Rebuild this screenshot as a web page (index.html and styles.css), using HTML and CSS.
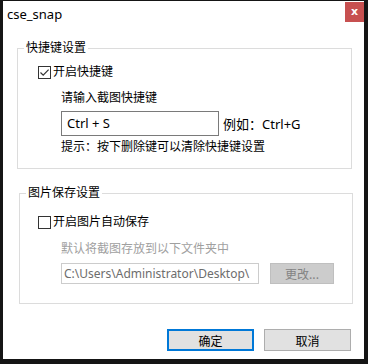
FILE: index.html
```html
<!DOCTYPE html>
<html lang="zh-CN">
<head>
  <meta charset="UTF-8">
  <title>cse_snap</title>
  <link rel="stylesheet" href="styles.css">
</head>
<body>

  <!-- 窗口 -->
  <div class="window">
    <div class="titlebar">
      <span class="title">cse_snap</span>
      <span class="close">x</span>
    </div>

    <!-- 快捷键设置 -->
    <fieldset class="group group-key">
      <legend>快捷键设置</legend>
      <div class="check-row">
        <span class="box checked">
          <svg width="11" height="11" viewBox="0 0 11 11"><path d="M1.5 5.5 L4.2 8.2 L9.6 2.6" fill="none" stroke="#333" stroke-width="1.2"/></svg>
        </span>
        <span>开启快捷键</span>
      </div>
      <div class="line first">请输入截图快捷键</div>
      <div class="input-row">
        <div class="input">Ctrl + S</div>
        <span class="example">例如：Ctrl+G</span>
      </div>
      <div class="line hint">提示：按下删除键可以清除快捷键设置</div>
    </fieldset>

    <!-- 图片保存设置 -->
    <fieldset class="group group-save">
      <legend>图片保存设置</legend>
      <div class="check-row">
        <span class="box"></span>
        <span>开启图片自动保存</span>
      </div>
      <div class="line first gray">默认将截图存放到以下文件夹中</div>
      <div class="path-row">
        <div class="input path">C:\Users\Administrator\Desktop\</div>
        <button class="btn disabled">更改...</button>
      </div>
    </fieldset>

    <div class="actions">
      <button class="btn default">确定</button>
      <button class="btn">取消</button>
    </div>
  </div>

</body>
</html>
```

FILE: styles.css
```css
body {
  margin: 0;
  padding: 1px 4px 5px 3px;
  background: #151515;
  font-family: "Noto Sans", "Noto Sans CJK SC", sans-serif;
  font-size: 12px;
  color: #000;
}

/* 窗口 */
.window {
  width: 361px;
  height: 358px;
  background: #fff;
  overflow: hidden;
}

.titlebar {
  display: flex;
  justify-content: space-between;
  align-items: flex-start;
  height: 39px;
}

.title {
  margin: 4px 0 0 4px;
  font-size: 13px;
  line-height: 18px;
}

.close {
  width: 19px;
  height: 20px;
  margin-top: 1px;
  background: #c75050;
  color: #fff;
  font-family: "DejaVu Sans", sans-serif;
  font-weight: bold;
  font-size: 11px;
  line-height: 19px;
  text-align: center;
}

/* 分组框 */
.group {
  margin: 0;
  padding: 0 0 13px;
  border: 1px solid #dcdcdc;
  min-width: 0;
}

.group-key {
  margin-left: 14px;
  width: 333px;
}

.group-save {
  margin: 16px 0 0 16px;
  width: 332px;
  padding-bottom: 19px;
}

.group legend {
  margin-left: 6px;
  padding: 0 2px;
  line-height: 16px;
}

.check-row {
  display: flex;
  align-items: center;
  gap: 2px;
  margin: 8px 0 0 20px;
  line-height: 16px;
}

.group-save .check-row {
  margin: 13px 0 0 18px;
}

.box {
  display: flex;
  align-items: center;
  justify-content: center;
  width: 11px;
  height: 11px;
  border: 1px solid #333;
}

.line {
  padding-left: 43px;
  line-height: 16px;
}

.group-save .line {
  padding-left: 41px;
}

.line.first {
  margin-top: 10px;
}

.group-save .line.first {
  margin-top: 11px;
}

.gray {
  color: #a0a0a0;
}

.hint {
  margin-top: 3px;
}

.input-row,
.path-row {
  display: flex;
  align-items: center;
  padding-left: 43px;
}

.input-row {
  margin-top: 5px;
}

.path-row {
  margin-top: 6px;
  padding-left: 41px;
}

.input {
  box-sizing: border-box;
  width: 158px;
  height: 25px;
  padding: 0 5px;
  border: 1px solid #7a7a7a;
  font-size: 13px;
  line-height: 23px;
  white-space: nowrap;
  overflow: hidden;
}

.example {
  margin-left: 4px;
  font-size: 13px;
}

.input.path {
  width: 198px;
  height: 21px;
  padding: 0 2px;
  border-color: #cccccc;
  color: #6d6d6d;
  font-size: 12px;
  line-height: 19px;
}

/* 按钮 */
.btn {
  box-sizing: border-box;
  height: 22px;
  padding: 0;
  border: 1px solid #adadad;
  background: #e1e1e1;
  font-family: "Noto Sans CJK SC", sans-serif;
  font-size: 12px;
  color: #000;
}

.btn.disabled {
  width: 64px;
  height: 21px;
  margin-left: 11px;
  border-color: #bfbfbf;
  background: #cccccc;
  color: #838383;
}

.actions {
  display: flex;
  justify-content: flex-end;
  gap: 10px;
  margin: 25px 13px 0 0;
}

.actions .btn {
  width: 87px;
}

.btn.default {
  border: 2px solid #0078d7;
}
```
